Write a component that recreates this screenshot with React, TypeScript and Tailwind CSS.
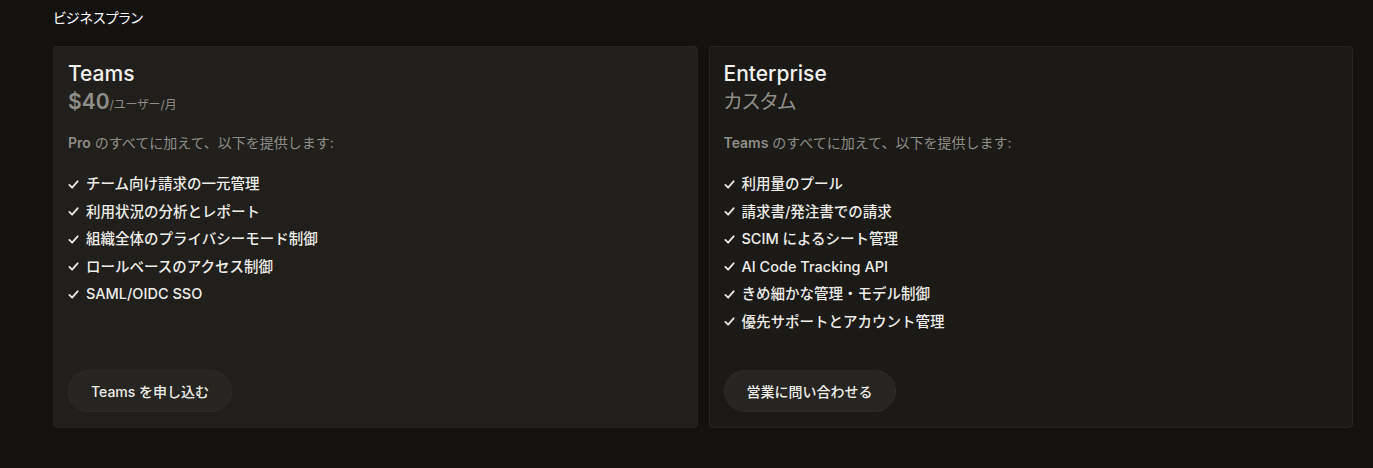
const plans = [
  {
    name: "Teams",
    price: "$40",
    unit: "/ユーザー/月",
    base: "Pro",
    features: [
      "チーム向け請求の一元管理",
      "利用状況の分析とレポート",
      "組織全体のプライバシーモード制御",
      "ロールベースのアクセス制御",
      "SAML/OIDC SSO",
    ],
    cta: "Teams を申し込む",
    card: "bg-[#201f1b]",
  },
  {
    name: "Enterprise",
    price: "カスタム",
    unit: "",
    base: "Teams",
    features: [
      "利用量のプール",
      "請求書/発注書での請求",
      "SCIM によるシート管理",
      "AI Code Tracking API",
      "きめ細かな管理・モデル制御",
      "優先サポートとアカウント管理",
    ],
    cta: "営業に問い合わせる",
    card: "bg-[#1b1a16]",
  },
];

function Check() {
  return (
    <svg width="11" height="11" viewBox="0 0 12 12" fill="none" className="shrink-0">
      <path d="M1.5 6.5L4.5 9.5L10.5 2.5" stroke="#e8e6e1" strokeWidth="2" strokeLinecap="round" strokeLinejoin="round" />
    </svg>
  );
}

export default function App() {
  return (
    <div
      className="min-h-[468px] bg-[#14120e] text-[#edecec] pl-[53px] pr-[20px] pt-[8px]"
      style={{ fontFamily: 'Inter, "Noto Sans CJK JP", sans-serif' }}
    >
      <h2 className="text-[14px] leading-[20px] text-white [font-feature-settings:'palt']">ビジネスプラン</h2>
      <div className="grid grid-cols-2 gap-[11px] mt-[18px]">
        {plans.map((p) => (
          <div
            key={p.name}
            className={`${p.card} h-[382px] rounded-[4px] border border-[#262521] px-[14px] pt-[14px] pb-[15px] flex flex-col`}
          >
            <div className="text-[21px] leading-[26px] font-medium text-[#f2f1ee]">{p.name}</div>
            <div className="flex items-baseline text-[#8f8d88] mt-[1px]">
              <span className={`leading-[28px] [font-feature-settings:'palt'] ${p.unit ? "text-[21px] font-semibold" : "text-[20px]"}`}>{p.price}</span>
              {p.unit && <span className="text-[12px] [font-feature-settings:'palt']">{p.unit}</span>}
            </div>
            <p className="text-[14px] leading-[20px] text-[#8f8d88] mt-[17px]">
              <span className="font-semibold">{p.base}</span> のすべてに加えて、以下を提供します:
            </p>
            <ul className="mt-[21px] flex flex-col gap-[7.6px]">
              {p.features.map((f) => (
                <li key={f} className="flex items-center gap-[7px] text-[14.5px] leading-[20px] font-medium text-[#eeede9]">
                  <Check />
                  <span>{f}</span>
                </li>
              ))}
            </ul>
            <div className="mt-auto">
              <button className="bg-[#262521] h-[42px] rounded-full border border-[#2c2b27] px-[22px] text-[14px] font-medium text-[#eeede9]">
                {p.cta}
              </button>
            </div>
          </div>
        ))}
      </div>
    </div>
  );
}
